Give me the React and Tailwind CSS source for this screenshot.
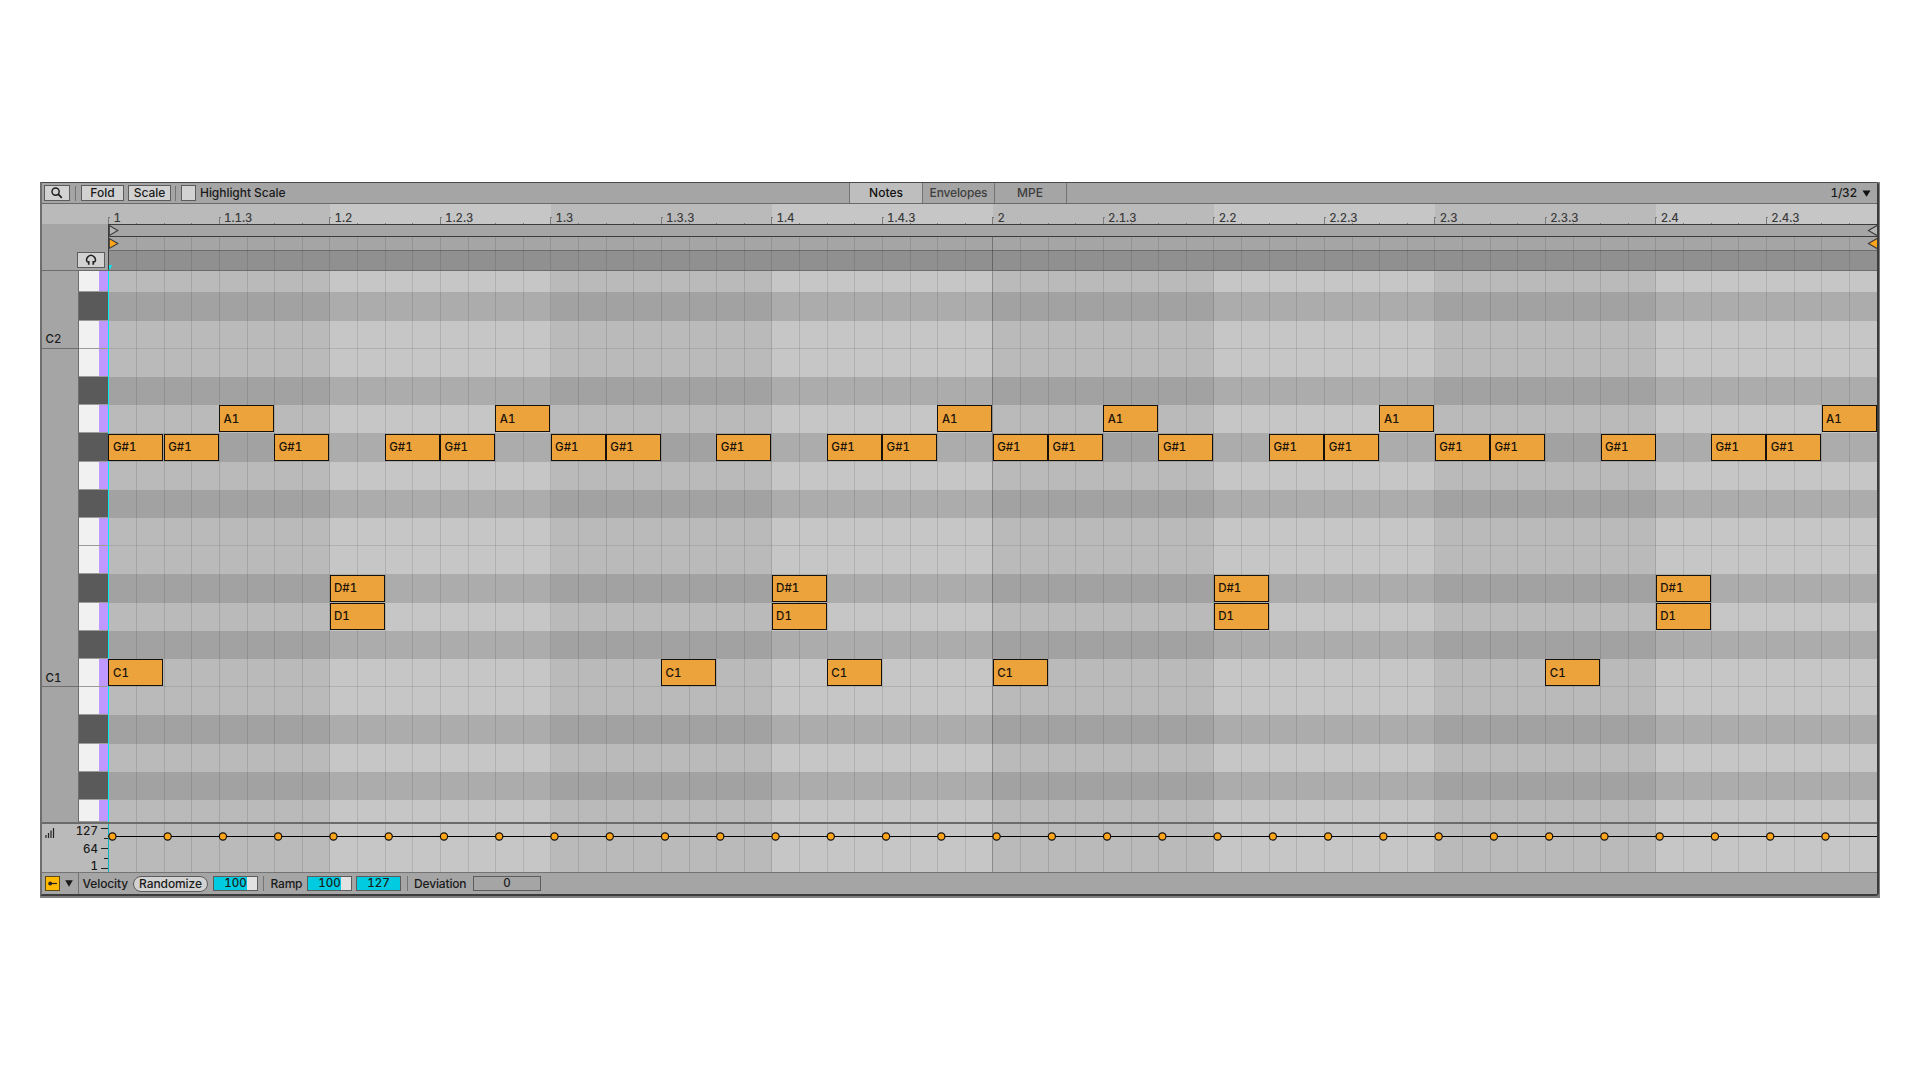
import React from "react";

const STEP = 27.63;
const ROW = 28.21;
const FIRST_ROW = 21.3;

// Pitch rows from top (D2) to bottom (G0); true marks a black key.
const ROWS = [
  false, true, false, false, true, false, true, false, true, false,
  false, true, false, true, false, false, true, false, true, false,
];

const NOTES = [
  { label: "A1", row: 5, at: [2, 7, 15, 18, 23, 31] },
  { label: "G#1", row: 6, at: [0, 1, 3, 5, 6, 8, 9, 11, 13, 14, 16, 17, 19, 21, 22, 24, 25, 27, 29, 30] },
  { label: "D#1", row: 11, at: [4, 12, 20, 28] },
  { label: "D1", row: 12, at: [4, 12, 20, 28] },
  { label: "C1", row: 14, at: [0, 10, 13, 16, 26] },
];

const LABELS = [
  "1", "1.1.3", "1.2", "1.2.3", "1.3", "1.3.3", "1.4", "1.4.3",
  "2", "2.1.3", "2.2", "2.2.3", "2.3", "2.3.3", "2.4", "2.4.3",
];

const STEPS = Array.from({ length: 64 }, (_, i) => i);
const BEATS = Array.from({ length: 8 }, (_, i) => i);

function BeatShades() {
  return (
    <div className="absolute inset-0 flex bg-[#c6c6c6]">
      {BEATS.map((b) => (
        <div
          key={b}
          className={"shrink-0 " + (b === 0 ? "w-[221.54px] " : "w-[221.04px] ") + (b % 2 ? "bg-[#c6c6c6]" : "bg-[#bababa]")}
        />
      ))}
    </div>
  );
}

function StepLines() {
  return (
    <div className="pointer-events-none absolute inset-0 flex pl-[0.48px]">
      {STEPS.map((s) => (
        <div
          key={s}
          className={
            "w-[27.63px] shrink-0 border-l " +
            (s === 0 ? "border-transparent" : s === 32 ? "border-black/30" : "border-black/[0.11]")
          }
        />
      ))}
    </div>
  );
}

function Divider() {
  return <div className="h-[15px] w-px shrink-0 bg-[#747474]" />;
}

function Toolbar() {
  return (
    <div className="flex h-[21px] items-center border-b border-[#6a6a6a] bg-[#a5a5a5] pl-[2px]">
      <div className="flex h-[16px] w-[26px] items-center justify-center border border-[#5c5c5c] bg-[#d2d2d2]">
        <svg width="12" height="12" viewBox="0 0 12 12" fill="none" stroke="#1c1c1c" strokeWidth="1.4">
          <circle cx="4.6" cy="4.6" r="3.6" />
          <path d="M7.2 7.2 L10.8 10.8" strokeWidth="1.7" />
        </svg>
      </div>
      <div className="ml-[5px]"><Divider /></div>
      <div className="ml-[5px] flex h-[16px] w-[43px] items-center justify-center border border-[#5c5c5c] bg-[#d2d2d2] leading-none">Fold</div>
      <div className="ml-[4px] flex h-[16px] w-[43px] items-center justify-center border border-[#5c5c5c] bg-[#d2d2d2] leading-none">Scale</div>
      <div className="ml-[4px]"><Divider /></div>
      <div className="ml-[5px] h-[16px] w-[15px] border border-[#5c5c5c] bg-[#d2d2d2]" />
      <div className="ml-[4px] w-[100px] whitespace-nowrap leading-none tracking-[-0.05px]">Highlight Scale</div>
      <div className="ml-[549px] flex h-full border-l border-[#747474] text-[#3e3e3e]">
        <div className="flex w-[73px] items-center justify-center border-r border-[#747474] bg-[#bebebe] text-[#111]">Notes</div>
        <div className="flex w-[72px] items-center justify-center border-r border-[#747474] tracking-[-0.15px]">Envelopes</div>
        <div className="flex w-[72px] items-center justify-center border-r border-[#747474] pr-px">MPE</div>
      </div>
      <div className="ml-auto flex items-center gap-[5px] pr-[6px] leading-none">
        <span className="tracking-[-0.3px]">1/32</span>
        <svg width="9" height="7" viewBox="0 0 9 7"><path d="M0.5 0.5 H8.5 L4.5 6.7 Z" fill="#111" /></svg>
      </div>
    </div>
  );
}

function Ruler() {
  return (
    <div className="flex h-[20px]">
      <div className="w-[66px] bg-[#bababa]" />
      <div className="relative flex-1 overflow-hidden">
        <BeatShades />
        <div className="absolute inset-0 flex items-end pl-[0.48px]">
          {STEPS.map((s) => (
            <div key={s} className={"w-[27.63px] shrink-0 border-l border-[#7c7c7c] " + (s % 4 ? "h-px" : "h-[7px]")}>
              {s % 4 === 0 && <div className="h-px w-px bg-[#7c7c7c]" />}
            </div>
          ))}
        </div>
        <div className="absolute inset-0 flex pl-[0.48px]">
          {LABELS.map((l) => (
            <div key={l} className="w-[110.52px] shrink-0 pl-[5px] pt-[8px] text-[11.5px] leading-[12px] text-[#3a3a3a]">{l}</div>
          ))}
        </div>
      </div>
    </div>
  );
}

function MarkerLanes() {
  return (
    <div className="flex h-[47px] border-b border-[#6c6c6c] bg-[#a5a5a5]">
      <div className="flex w-[66px] items-end justify-end pb-[2px] pr-[3px]">
        <div className="flex h-[16px] w-[28px] items-center justify-center border border-[#5c5c5c] bg-[#d2d2d2]">
          <svg width="12" height="12" viewBox="0 0 12 12" fill="none" stroke="#222">
            <path d="M2.6 8.4 A4.3 4.3 0 1 1 9.4 8.4" strokeWidth="1.5" />
            <path d="M3.7 7 V10.8 M8.3 7 V10.8" strokeWidth="1.7" />
          </svg>
        </div>
      </div>
      <div className="relative flex flex-1 flex-col overflow-hidden border-l border-t border-[#3c3c3c]">
        <div className="relative h-[12px] border-b border-[#3c3c3c]" />
        <div className="h-[14px] border-b border-[#6c6c6c]" />
        <div className="flex-1 bg-[#909090]" />
        <div className="absolute inset-x-0 bottom-0 top-[12px] -ml-px"><StepLines /></div>
        <svg className="absolute left-0 top-0" width="12" height="46" viewBox="0 0 12 46">
          <path d="M0.3 0.5 L8.8 5.5 L0.3 10.5 Z" fill="#b5b5b5" stroke="#3c3c3c" strokeWidth="1.1" />
          <path d="M0.3 13.5 L8.8 18.5 L0.3 23.5 Z" fill="#ffa519" stroke="#3c3c3c" strokeWidth="1.1" />
          <path d="M0 40 H3 Q2.4 43 0 45 Z" fill="#00eaf5" />
        </svg>
        <svg className="absolute right-0 top-0" width="12" height="46" viewBox="0 0 12 46">
          <path d="M12 0.5 L3.4 5.5 L12 10.5" fill="#b5b5b5" stroke="#3c3c3c" strokeWidth="1.1" />
          <path d="M12 13.5 L3.4 18.5 L12 23.5" fill="#ffa519" stroke="#3c3c3c" strokeWidth="1.1" />
        </svg>
      </div>
    </div>
  );
}

const ROW_TRACKS = "grid grid-rows-[21.3px_repeat(18,28.21px)_1fr]";

function PianoRoll() {
  return (
    <div className="flex h-[551px]">
      <div className="flex w-[36px] flex-col bg-[#a5a5a5]">
        <div className="flex h-[78px] items-end border-b border-[#6e6e6e] pb-[2px] pl-[3.5px] text-[11.5px] leading-[14px]">C2</div>
        <div className="flex h-[338px] items-end border-b border-[#6e6e6e] pb-px pl-[3.5px] text-[11.5px] leading-[14px]">C1</div>
      </div>
      <div className={ROW_TRACKS + " w-[30px] border-l border-[#6e6e6e] bg-[#9b9b9b]"}>
        {ROWS.map((black, i) =>
          black ? (
            <div key={i} className="pb-px"><div className="h-full bg-[#5a5a5a]" /></div>
          ) : (
            <div key={i} className="flex pb-px">
              <div className="w-[20px] bg-[#f1f1f1]" />
              <div className="flex-1 bg-[#bf99ff]" />
            </div>
          )
        )}
      </div>
      <div className="relative flex-1 overflow-hidden">
        <BeatShades />
        <div className={ROW_TRACKS + " absolute inset-0"}>
          {ROWS.map((black, i) => (
            <div
              key={i}
              className={black ? "bg-black/[0.13]" : i === 2 || i === 9 || i === 14 ? "border-b border-black/10" : ""}
            />
          ))}
        </div>
        <StepLines />
        <div className="absolute inset-y-0 left-0 w-px bg-[#00eaf5]" />
        {NOTES.flatMap((n) =>
          n.at.map((p) => (
            <div
              key={n.label + p}
              className="absolute flex h-[27px] w-[55px] items-center border border-[#15100a] bg-[#eca33c] pl-[3.5px] pt-[1.5px] text-[11.5px] leading-none text-[#1a1208]"
              style={{ left: 0.48 + p * 2 * STEP, top: FIRST_ROW + (n.row - 1) * ROW + 0.3 }}
            >
              {n.label}
            </div>
          ))
        )}
      </div>
    </div>
  );
}

function VelocityLane() {
  return (
    <div className="flex h-[50px] border-t-2 border-[#6b6b6b]">
      <div className="flex w-[66px] bg-[#bababa]">
        <svg className="ml-[3px] mt-[3px]" width="11" height="11" viewBox="0 0 11 11" stroke="#222" strokeWidth="1.2">
          <path d="M1 11 V8 M3.5 11 V6 M6 11 V3.5 M8.5 11 V1" />
        </svg>
        <div className="-mt-px flex flex-1 flex-col items-end text-[11.5px] leading-[17.7px]">
          <span>127</span>
          <span>64</span>
          <span>1</span>
        </div>
        <svg className="ml-px" width="9" height="48" viewBox="0 0 9 48" stroke="#222" strokeWidth="1.2">
          <path d="M2 4.5 H9 M5 14.5 H9 M2 24.5 H9 M5 34.5 H9 M2 44.5 H9" />
        </svg>
      </div>
      <div className="relative flex-1 overflow-hidden">
        <BeatShades />
        <StepLines />
        <div className="absolute inset-y-0 left-0 w-px bg-[#00b8c4]" />
        <svg className="absolute left-0 top-0" width="1769" height="48" viewBox="0 0 1769 48">
          <path d="M0 12.5 H1769" stroke="#000" strokeWidth="1.2" />
          {Array.from({ length: 32 }, (_, i) => (
            <circle key={i} cx={4.4 + i * 2 * STEP} cy="12.5" r="3.6" fill="#ffa519" stroke="#15100a" strokeWidth="1.2" />
          ))}
        </svg>
      </div>
    </div>
  );
}

function NumberBox({ value, full }) {
  return (
    <div className="relative flex h-[15px] w-[45px] shrink-0 items-center justify-center border border-[#5c5c5c] bg-[#e2e2e2] text-[11.5px] leading-none">
      <div className={"absolute inset-y-0 left-0 bg-[#00cbe0] " + (full ? "w-full" : "w-[33px]")} />
      <span className="relative top-[0.5px]">{value}</span>
    </div>
  );
}

function Footer() {
  return (
    <div className="flex h-[22px] items-center border-t border-[#747474] bg-[#a5a5a5] pl-[3px] leading-none">
      <div className="flex size-[15px] items-center justify-center border border-[#5c4a10] bg-[#ffb900]">
        <svg width="11" height="7" viewBox="0 0 11 7"><circle cx="3.2" cy="3.5" r="1.9" fill="#222" /><path d="M3 3.5 H10" stroke="#222" strokeWidth="1.2" /></svg>
      </div>
      <svg className="ml-[5px]" width="8" height="7" viewBox="0 0 8 7"><path d="M0.2 0.3 H7.8 L4 6.7 Z" fill="#1a1a1a" /></svg>
      <div className="ml-[5px] h-full w-px bg-[#747474]" />
      <div className="ml-[3.5px] w-[50.5px] tracking-[-0.1px]">Velocity</div>
      <div className="flex h-[16px] w-[75px] items-center justify-center rounded-full border border-[#5c5c5c] bg-[#d2d2d2] tracking-[-0.1px]">Randomize</div>
      <div className="ml-[5px]"><NumberBox value="100" /></div>
      <div className="ml-[5px]"><Divider /></div>
      <div className="ml-[6.5px] w-[36.5px] tracking-[-0.2px]">Ramp</div>
      <NumberBox value="100" />
      <div className="ml-[4px]"><NumberBox value="127" full /></div>
      <div className="ml-[6px]"><Divider /></div>
      <div className="ml-[6px] w-[59px] tracking-[-0.15px]">Deviation</div>
      <div className="flex h-[15px] w-[68px] items-center justify-center border border-[#5c5c5c] text-[11.5px]">0</div>
    </div>
  );
}

export default function App() {
  return (
    <div className="h-[1080px] w-[1920px] overflow-hidden bg-white pl-[40px] pt-[182px] font-['Inter',sans-serif] text-[12px] font-medium tabular-nums text-[#1a1a1a]">
      <div className="h-[716px] w-[1840px] bg-[#7f7f7f] pr-px">
        <div className="h-[714px] rounded-r-[4px] border-b-2 border-l-2 border-r-2 border-t border-b-[#3c3c3c] border-l-[#6e6e6e] border-r-[#3c3c3c] border-t-[#4a4a4a]">
          <Toolbar />
          <Ruler />
          <MarkerLanes />
          <PianoRoll />
          <VelocityLane />
          <Footer />
        </div>
      </div>
    </div>
  );
}
